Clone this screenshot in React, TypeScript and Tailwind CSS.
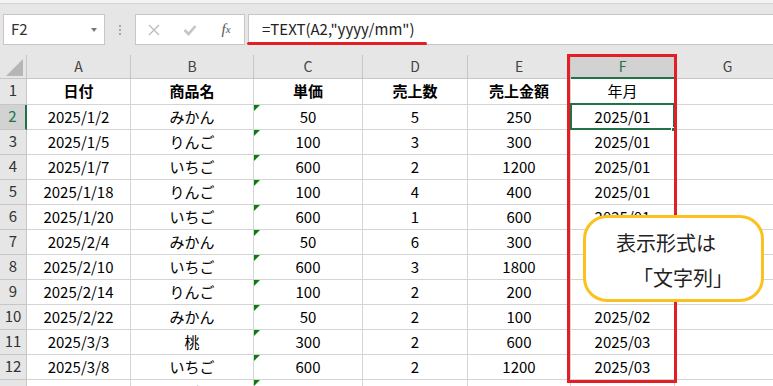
import React from "react";

type Row = [string, string, string, string, string, string];

const rows: Row[] = [
  ["2025/1/2", "みかん", "50", "5", "250", "2025/01"],
  ["2025/1/5", "りんご", "100", "3", "300", "2025/01"],
  ["2025/1/7", "いちご", "600", "2", "1200", "2025/01"],
  ["2025/1/18", "りんご", "100", "4", "400", "2025/01"],
  ["2025/1/20", "いちご", "600", "1", "600", "2025/01"],
  ["2025/2/4", "みかん", "50", "6", "300", "2025/02"],
  ["2025/2/10", "いちご", "600", "3", "1800", "2025/02"],
  ["2025/2/14", "りんご", "100", "2", "200", "2025/02"],
  ["2025/2/22", "みかん", "50", "2", "100", "2025/02"],
  ["2025/3/3", "桃", "300", "2", "600", "2025/03"],
  ["2025/3/8", "いちご", "600", "2", "1200", "2025/03"],
  ["2025/4/5", "ぶどう", "500", "1", "500", "2025/04"],
];

const colLetters = ["A", "B", "C", "D", "E", "F", "G"];
const headers = ["日付", "商品名", "単価", "売上数", "売上金額"];

function Cell({
  children,
  bold,
  tri,
  h,
}: {
  children?: React.ReactNode;
  bold?: boolean;
  tri?: boolean;
  h: string;
}) {
  return (
    <div
      className={`relative flex items-center justify-center border-r border-b border-[#d4d4d4] bg-white pb-[2px] text-[15px] leading-none text-black ${h} ${
        bold ? "font-bold" : ""
      }`}
    >
      {tri && (
        <div className="absolute left-0 top-0 h-0 w-0 border-t-[6px] border-r-[6px] border-t-[#0b7d0b] border-r-transparent" />
      )}
      {children}
    </div>
  );
}

export default function App() {
  return (
    <div className="relative h-[386px] w-[773px] overflow-hidden bg-white font-['Noto_Sans_CJK_JP',sans-serif] text-black">
      {/* top strip */}
      <div className="h-[3px] bg-[#f3f3f3]" />
      {/* formula bar */}
      <div className="flex h-[52px] items-start border-t border-[#d4d4d4] bg-[#e6e6e6] pl-[3px] pt-[10px]">
        <div className="flex h-[31px] w-[102px] items-center border border-[#c6c6c6] bg-white pl-[7px] text-[15px] text-[#333]">
          <span>F2</span>
          <div className="ml-auto mr-[7px] h-0 w-0 border-l-[3.5px] border-r-[3.5px] border-t-[4px] border-l-transparent border-r-transparent border-t-[#787878]" />
        </div>
        <div className="flex h-[31px] w-[30px] flex-col items-center justify-center gap-[2px]">
          <div className="h-[2px] w-[2px] bg-[#a6a6a6]" />
          <div className="h-[2px] w-[2px] bg-[#a6a6a6]" />
          <div className="h-[2px] w-[2px] bg-[#a6a6a6]" />
        </div>
        <div className="flex h-[31px] w-[110px] items-center border border-[#c6c6c6] bg-white">
          <div className="flex w-[36px] items-center justify-center">
            <svg width="12" height="12" viewBox="0 0 12 12">
              <path d="M1 1 L11 11 M11 1 L1 11" stroke="#bdbdbd" strokeWidth="1.4" fill="none" />
            </svg>
          </div>
          <div className="flex w-[36px] items-center justify-center">
            <svg width="14" height="12" viewBox="0 0 14 12">
              <path d="M1.5 6 L5.5 10 L12.5 2" stroke="#c4c4c4" strokeWidth="2.6" fill="none" />
            </svg>
          </div>
          <div className="flex w-[36px] items-center justify-center font-['Liberation_Serif',serif] text-[15px] italic text-[#555]">
            <span>f</span>
            <span className="text-[11px]">x</span>
          </div>
        </div>
        <div className="ml-[3px] flex h-[31px] flex-1 items-center border-y border-l border-[#c6c6c6] bg-white pl-[13px] text-[15px] text-[#222]">
          =TEXT(A2,"yyyy/mm")
        </div>
      </div>

      {/* grid */}
      <div className="grid w-[781px] grid-cols-[27px_104px_123px_109px_105px_103px_104px_106px]">
        {/* header row */}
        <div className="relative h-[24px] border-r border-b border-[#c6c6c6] bg-[#e6e6e6]">
          <svg className="absolute left-0 top-0" width="27" height="24" viewBox="0 0 27 24">
            <polygon points="23,4 23,21 6,21" fill="#b6b6b6" />
          </svg>
        </div>
        {colLetters.map((l) =>
          l === "F" ? (
            <div
              key={l}
              className="flex h-[24px] items-center justify-center border-r border-b-2 border-r-[#c6c6c6] border-b-[#217346] bg-[#d2d2d2] text-[14px] text-[#217346]"
            >
              {l}
            </div>
          ) : (
            <div
              key={l}
              className="flex h-[24px] items-center justify-center border-r border-b border-[#c6c6c6] bg-[#e6e6e6] text-[14px] text-[#444]"
            >
              {l}
            </div>
          )
        )}

        {/* row 1 */}
        <div className="flex h-[26px] items-center justify-center border-r border-b border-[#c6c6c6] bg-[#e6e6e6] pb-[2px] text-[15px] text-[#333]">
          1
        </div>
        {headers.map((t) => (
          <Cell key={t} bold h="h-[26px]">
            {t}
          </Cell>
        ))}
        <Cell h="h-[26px]">年月</Cell>
        <Cell h="h-[26px]" />

        {rows.map((r, i) => {
          const n = i + 2;
          return (
            <React.Fragment key={n}>
              {n === 2 ? (
                <div className="flex h-[25px] items-center justify-center border-r-2 border-b border-r-[#217346] border-b-[#c6c6c6] bg-[#d2d2d2] pb-[2px] text-[15px] text-[#217346]">
                  {n}
                </div>
              ) : (
                <div className="flex h-[25px] items-center justify-center border-r border-b border-[#c6c6c6] bg-[#e6e6e6] pb-[2px] text-[15px] text-[#333]">
                  {n}
                </div>
              )}
              <Cell h="h-[25px]">{r[0]}</Cell>
              <Cell h="h-[25px]">{r[1]}</Cell>
              <Cell h="h-[25px]" tri>
                {r[2]}
              </Cell>
              <Cell h="h-[25px]">{r[3]}</Cell>
              <Cell h="h-[25px]">{r[4]}</Cell>
              <Cell h="h-[25px]">{r[5]}</Cell>
              <Cell h="h-[25px]" />
            </React.Fragment>
          );
        })}
      </div>

      {/* active cell F2 */}
      <div className="absolute left-[570px] top-[103px] h-[27px] w-[105px] border-2 border-[#217346]" />
      <div className="absolute left-[671px] top-[127px] h-[5px] w-[5px] border border-white bg-[#217346]" />

      {/* red highlight box around column F */}
      <div className="absolute left-[567px] top-[54px] h-[329px] w-[110px] border-[3px] border-[#e31e24]" />

      {/* callout */}
      <div className="absolute left-[583px] top-[215px] h-[87px] w-[181px] rounded-[24px] border-[3px] border-[#fcc11d] bg-white pl-[30px] pt-[7px] text-[20px] leading-[35px] text-[#222]">
        <div>表示形式は</div>
        <div className="pl-[17px]">「文字列」</div>
      </div>

      {/* red underline under formula */}
      <div className="absolute left-[247px] top-[42px] h-[3px] w-[180px] rounded-full bg-[#e31e24]" />
    </div>
  );
}
